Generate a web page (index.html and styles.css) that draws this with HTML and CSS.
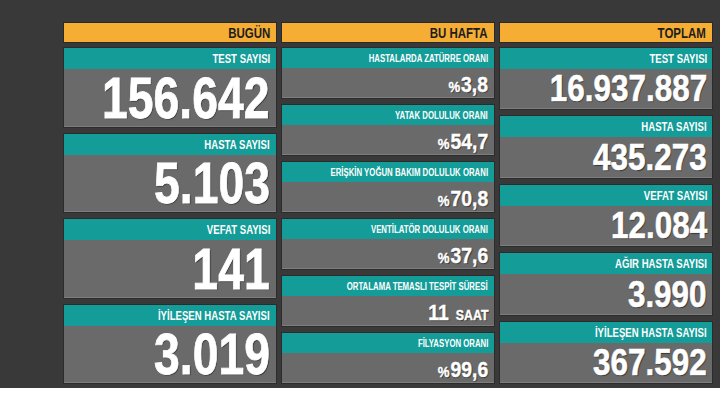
FILE: index.html
```html
<!DOCTYPE html>
<html lang="tr">
<head>
<meta charset="utf-8">
<title>Tablo</title>
<link rel="stylesheet" href="styles.css">
</head>
<body>
<div class="board">
  <div class="col col-left">
    <div class="head"><span class="sq">BUGÜN</span></div>
    <div class="cards">
      <div class="card"><div class="label"><span class="sq">TEST SAYISI</span></div><div class="value"><span class="sq">156.642</span></div></div>
      <div class="card"><div class="label"><span class="sq">HASTA SAYISI</span></div><div class="value"><span class="sq">5.103</span></div></div>
      <div class="card"><div class="label"><span class="sq">VEFAT SAYISI</span></div><div class="value"><span class="sq">141</span></div></div>
      <div class="card"><div class="label"><span class="sq">İYİLEŞEN HASTA SAYISI</span></div><div class="value"><span class="sq">3.019</span></div></div>
    </div>
  </div>
  <div class="col col-mid">
    <div class="head"><span class="sq">BU HAFTA</span></div>
    <div class="cards">
      <div class="card"><div class="label"><span class="sq">HASTALARDA ZATÜRRE ORANI</span></div><div class="value"><span class="sq"><span class="pct">%</span>3,8</span></div></div>
      <div class="card"><div class="label"><span class="sq">YATAK DOLULUK ORANI</span></div><div class="value"><span class="sq"><span class="pct">%</span>54,7</span></div></div>
      <div class="card"><div class="label"><span class="sq">ERİŞKİN YOĞUN BAKIM DOLULUK ORANI</span></div><div class="value"><span class="sq"><span class="pct">%</span>70,8</span></div></div>
      <div class="card"><div class="label"><span class="sq">VENTİLATÖR DOLULUK ORANI</span></div><div class="value"><span class="sq"><span class="pct">%</span>37,6</span></div></div>
      <div class="card"><div class="label"><span class="sq">ORTALAMA TEMASLI TESPİT SÜRESİ</span></div><div class="value"><span class="sq">11 <span class="unit">SAAT</span></span></div></div>
      <div class="card"><div class="label"><span class="sq">FİLYASYON ORANI</span></div><div class="value"><span class="sq"><span class="pct">%</span>99,6</span></div></div>
    </div>
  </div>
  <div class="col col-right">
    <div class="head"><span class="sq">TOPLAM</span></div>
    <div class="cards">
      <div class="card"><div class="label"><span class="sq">TEST SAYISI</span></div><div class="value"><span class="sq">16.937.887</span></div></div>
      <div class="card"><div class="label"><span class="sq">HASTA SAYISI</span></div><div class="value"><span class="sq">435.273</span></div></div>
      <div class="card"><div class="label"><span class="sq">VEFAT SAYISI</span></div><div class="value"><span class="sq">12.084</span></div></div>
      <div class="card"><div class="label"><span class="sq">AĞIR HASTA SAYISI</span></div><div class="value"><span class="sq">3.990</span></div></div>
      <div class="card"><div class="label"><span class="sq">İYİLEŞEN HASTA SAYISI</span></div><div class="value"><span class="sq">367.592</span></div></div>
    </div>
  </div>
</div>
</body>
</html>
```
FILE: styles.css
```css
html, body {
  margin: 0;
  padding: 0;
  background: #ffffff;
}
body {
  width: 720px;
  height: 406px;
  overflow: hidden;
  font-family: "Liberation Sans", Arial, sans-serif;
  font-weight: bold;
}
.board {
  box-sizing: border-box;
  height: 388px;
  background: #393939;
  padding: 22px 0 4px 63px;
  display: flex;
  gap: 4px;
}
.col {
  width: 214px;
  display: flex;
  flex-direction: column;
  gap: 4px;
}
.sq {
  display: inline-block;
  transform: scaleX(0.8);
  transform-origin: right center;
  white-space: nowrap;
}
.head {
  height: 21px;
  box-sizing: border-box;
  background: #f5ad34;
  border: 1px solid #2a2a2a;
  color: #1d1d1d;
  font-size: 14px;
  line-height: 20px;
  text-align: right;
  padding-right: 6px;
  white-space: nowrap;
}
.head .sq {
  transform: scaleX(0.82);
}
.cards {
  flex: 1;
  min-height: 0;
  display: flex;
  flex-direction: column;
  gap: 5px;
}
.card {
  flex: 1 1 0;
  min-height: 0;
  display: flex;
  flex-direction: column;
  background: #6a6a6a;
  border: 1px solid #2c2c2c;
  box-shadow: inset 0 -1px 0 #7e7e7e;
}
.label {
  background: #139c98;
  color: #ffffff;
  text-align: right;
  padding-right: 6px;
  height: 21px;
  line-height: 22px;
  font-size: 12px;
  white-space: nowrap;
  flex: none;
}
.value {
  flex: 1 1 0;
  min-height: 0;
  display: flex;
  align-items: center;
  justify-content: flex-end;
  padding-right: 6px;
  color: #ffffff;
  text-shadow: 1px 1px 1px rgba(0,0,0,0.55);
  white-space: nowrap;
  line-height: 0.8;
}
.col-left .value {
  font-size: 58px;
  -webkit-text-stroke: 0.8px #ffffff;
}
.col-mid .label {
  font-size: 10px;
  height: 20px;
  line-height: 21px;
}
.col-mid .label .sq {
  transform: scaleX(0.78);
}
.col-mid .value {
  font-size: 22px;
  padding-top: 3px;
  -webkit-text-stroke: 0.4px #ffffff;
}
.col-mid .value .sq {
  transform: scaleX(0.88);
}
.pct {
  font-size: 15px;
  margin-right: 1px;
}
.unit {
  font-size: 14px;
  margin-left: 2px;
}
.col-right .value {
  font-size: 37px;
  padding-right: 5px;
  -webkit-text-stroke: 0.6px #ffffff;
}
.col-right .value .sq {
  transform: scaleX(0.85);
}
.col-right .label {
  padding-right: 5px;
}
```
